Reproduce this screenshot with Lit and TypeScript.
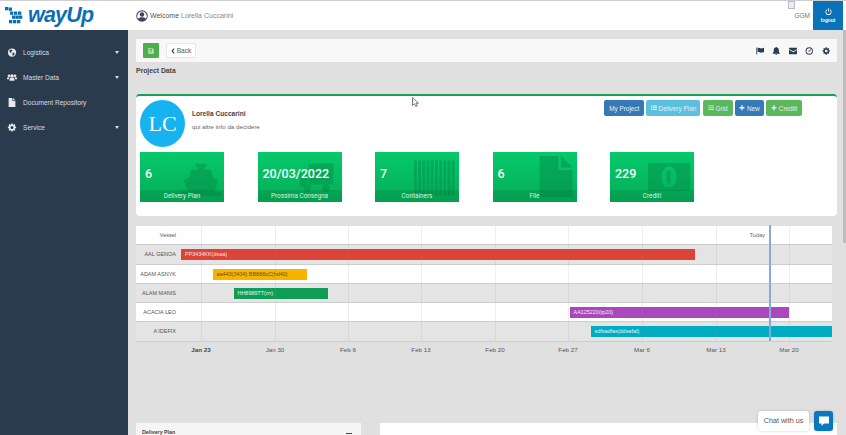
import { LitElement, html, css, svg } from "lit";
import { customElement } from "lit/decorators.js";

const X0 = 136; // gantt left in page coordinates
const ticks = [
  { x: 201, t: "Jan 23", bold: true },
  { x: 275, t: "Jan 30" },
  { x: 348, t: "Feb 6" },
  { x: 421, t: "Feb 13" },
  { x: 495, t: "Feb 20" },
  { x: 568, t: "Feb 27" },
  { x: 642, t: "Mar 6" },
  { x: 716, t: "Mar 13" },
  { x: 789, t: "Mar 20" },
];
const rows = [
  { name: "AAL GENOA", from: 181, to: 695, c: "#db4437", label: "PP3434KK(dsaa)", tx: "#fbe3e0" },
  { name: "ADAM ASNYK", from: 212.5, to: 307, c: "#f4b400", label: "aa443(3434) BB888cC(hd40)", tx: "#6d5200" },
  { name: "ALAM MANIS", from: 233.5, to: 328, c: "#0f9d58", label: "HH8989TT(rrr)", tx: "#e4f6ec" },
  { name: "ACACIA LEO", from: 569.5, to: 789, c: "#ab47bc", label: "AA125220(tp20)", tx: "#f6e6f8" },
  { name: "A IDEFIX", from: 590.5, to: 832, c: "#00acc1", label: "sdfsadfas(ddsafaf)", tx: "#e0f7fa" },
];

const ic = (vb: string, body: unknown, cls = "") =>
  html`<svg class=${cls} viewBox=${vb} fill="currentColor" aria-hidden="true">${body}</svg>`;

const gearPath =
  "M10.2 1h3.6l.5 2.7 1.9.8 2.3-1.6 2.5 2.5-1.6 2.3.8 1.9 2.8.5v3.6l-2.8.5-.8 1.9 1.6 2.3-2.5 2.5-2.3-1.6-1.9.8-.5 2.8h-3.6l-.5-2.8-1.9-.8-2.3 1.6-2.5-2.5 1.6-2.3-.8-1.9-2.8-.5v-3.6l2.8-.5.8-1.9-1.6-2.3 2.5-2.5 2.3 1.6 1.9-.8zM12 8a4 4 0 1 0 0 8 4 4 0 0 0 0-8z";

const icons = {
  globe: ic("0 0 24 24", svg`<path fill-rule="evenodd" d="M12 1a11 11 0 1 0 0 22 11 11 0 0 0 0-22zM5 6l4-2 3 1 1 3-3 2-1 3-3-2zm9 6 5 1-1 5-4 3-1-5z"/>`),
  users: ic("0 0 28 24", svg`<circle cx="14" cy="8" r="5"/><circle cx="5.5" cy="7" r="3.6"/><circle cx="22.5" cy="7" r="3.6"/><path d="M7 21v-4c0-3 3-4 7-4s7 1 7 4v4zM0 17v-3c0-2 2-3 5-3l2 1c-1.200 1-2 2.500-2 5zM28 17v-3c0-2-2-3-5-3l-2 1c1.200 1 2 2.500 2 5z"/>`),
  file: ic("0 0 20 24", svg`<path d="M1 0h10v8h8v16H1zM13 0l6 6h-6z"/>`),
  gear: ic("0 0 24 24", svg`<path fill-rule="evenodd" d=${gearPath}/>`),
  flag: ic("0 0 26 24", svg`<path d="M1 1h2.500v22H1zM5 3c4-2 7 1 10 1s6-1 10-2v13c-4 2-7 2-10 2s-6-3-10-1z"/>`),
  bell: ic("0 0 24 24", svg`<path d="M12 0c1 0 1.800.8 1.800 1.800C17.500 2.600 19.500 5.500 19.500 9c0 6 1.500 8 3.500 10v1H1v-1c2-2 3.500-4 3.500-10 0-3.500 2-6.400 5.700-7.200C10.200.8 11 0 12 0zM9.500 21.500h5a2.500 2.500 0 0 1-5 0z"/>`),
  mail: ic("0 0 28 22", svg`<path d="M1 0h26c.6 0 1 .4 1 1v3L14 12 0 4V1c0-.6.400-1 1-1zM0 7l14 8 14-8v14c0 .6-.4 1-1 1H1c-.6 0-1-.4-1-1z"/>`),
  clock: ic("0 0 24 24", svg`<path fill-rule="evenodd" d="M12 1a11 11 0 1 0 0 22 11 11 0 0 0 0-22zm0 2.800a8.200 8.200 0 1 1 0 16.400 8.200 8.200 0 0 1 0-16.400z"/><path d="M15.500 6.500 17.500 8 12 14.500 8 12l1.200-1.800 2.300 1.500z"/>`),
  power: ic("0 0 24 24", svg`<path d="M10.500 1h3v11h-3z"/><path d="M7 4.500v3.400a7.500 7.500 0 1 0 10 0V4.500a10.500 10.500 0 1 1-10 0z"/>`),
  list: ic("0 0 24 20", svg`<path d="M0 1h5v4H0zM7 1h17v4H7zM0 8h5v4H0zM7 8h17v4H7zM0 15h5v4H0zM7 15h17v4H7z"/>`),
  lines: ic("0 0 24 20", svg`<path d="M0 1h3v3H0zM5 1h19v3H5zM0 8.500h3v3H0zM5 8.500h19v3H5zM0 16h3v3H0zM5 16h19v3H5z"/>`),
  plus: ic("0 0 20 20", svg`<path d="M7.500 1h5v6.500H19v5h-6.500V19h-5v-6.500H1v-5h6.500z"/>`),
  save: ic("0 0 20 20", svg`<path fill-rule="evenodd" d="M1 1h15l3 3v15H1zm4 2v5h9V3zm1 9v2h8v-2z"/>`),
  back: ic("0 0 12 20", svg`<path d="M9 1l2.500 2.500L5.500 10l6 6.500L9 19 0.500 10z"/>`),
  user: ic("0 0 24 24", svg`<path fill-rule="evenodd" d="M12 .5a11.500 11.500 0 1 0 0 23 11.500 11.500 0 0 0 0-23zm0 2a9.500 9.500 0 0 1 7.600 15.200c-1.400-2-4-3-7.600-3s-6.200 1-7.600 3A9.500 9.500 0 0 1 12 2.500z"/><circle cx="12" cy="9" r="4.500"/>`),
  chat: ic("0 0 24 24", svg`<path d="M2 3h20v14H12l-5 5v-5H2z"/>`),
};

const tileArt = {
  ship: ic("0 0 60 50", svg`<path d="M22 2h16v5h-3v4h10l3 12 8 4-6 17H10L4 27l8-4 3-12h10V7h-3z"/><path d="M0 44c6-2 10 3 15 0s10 3 15 0 10 3 15 0 10 3 15 0v6H0z"/>`),
  truck: ic("0 0 60 50", svg`<path d="M14 0h40v34H14zM0 18h12v20H0z"/><circle cx="12" cy="40" r="6"/><circle cx="42" cy="40" r="6"/>`),
  boxes: ic("0 0 60 50", svg`<path d="M0 0h4v50H0zM6 0h4v50H6zM12 0h4v50h-4zM18 0h4v50h-4zM24 0h4v50h-4zM30 0h4v50h-4zM36 0h4v50h-4zM42 0h4v50h-4zM48 0h4v50h-4zM54 0h4v50h-4z"/>`),
  doc: ic("0 0 40 50", svg`<path d="M0 0h23v17h17v33H0zM26 0l14 14H26z"/>`),
  money: ic("0 0 60 40", svg`<path fill-rule="evenodd" d="M0 0h60v40H0zM30 5c-7 0-11 7-11 15s4 15 11 15 11-7 11-15S37 5 30 5z"/><path d="M27 11h5v18h-5z"/>`),
};

const tiles = [
  { v: "6", l: "Delivery Plan", a: tileArt.ship, cls: "ship" },
  { v: "20/03/2022", l: "Prossima Consegna", a: tileArt.truck, cls: "truck" },
  { v: "7", l: "Containers", a: tileArt.boxes, cls: "boxes" },
  { v: "6", l: "File", a: tileArt.doc, cls: "doc" },
  { v: "229", l: "Crediti", a: tileArt.money, cls: "money" },
];

const nav = [
  { i: icons.globe, t: "Logistica", c: true },
  { i: icons.users, t: "Master Data", c: true },
  { i: icons.file, t: "Document Repository", c: false },
  { i: icons.gear, t: "Service", c: true },
];

const dots: [number, number][] = [
  [5, 6], [8.7, 6.5],
  [10, 10.5], [14, 10.5], [18, 10.5],
  [12, 14.5], [15.5, 14.5], [19, 14.5],
  [9, 19], [13, 19], [17, 19],
];

@customElement("app-root")
export class AppRoot extends LitElement {
  static styles = css`
    :host { display: block; height: 435px; overflow: hidden; position: relative; background: #e0e0e0;
      font-family: "Liberation Sans", Arial, sans-serif; color: #444; }
    * { box-sizing: border-box; }
    svg { display: block; }

    .top { height: 30px; background: #fff; border-top: 1px solid #cfcfcf; display: flex; align-items: stretch; padding-right: 3px; }
    .logo { width: 128px; display: flex; align-items: center; position: relative; }
    .dots { width: 28px; height: 29px; flex: none; }
    .word { font: italic 700 21.5px "Liberation Sans", sans-serif; color: #0c6fb5; letter-spacing: -.8px; }
    .welcome { display: flex; align-items: center; gap: 2px; margin-left: 8px; font-size: 7px; color: #555; }
    .welcome svg { width: 12px; height: 12px; color: #3b4656; }
    .welcome span span { color: #888; }
    .spacer { flex: 1; }
    .ggm { width: 25px; position: relative; font-size: 6.5px; color: #777; text-align: right; padding: 11px 3px 0 0; }
    .broken { position: absolute; left: 0; top: 0; width: 7px; height: 8px; border: 1px solid #b8b8c8; background: #e8eef8; }
    .logout { width: 30px; background: #0a72b9; color: #fff; display: flex; flex-direction: column; align-items: center; padding-top: 7px; gap: 3px; font-size: 4.8px; font-weight: 700; }
    .logout svg { width: 7px; height: 7px; }

    .body { display: flex; height: 405px; }
    .side { width: 128px; flex: none; background: #2a3b4d; color: #d7dde3; padding-top: 9.5px; }
    .nav { height: 25px; display: flex; align-items: center; padding-left: 7px; font-size: 6.6px; }
    .nav .ni { width: 16px; flex: none; }
    .nav svg { width: 10px; height: 9px; color: #e6eaee; }
    .caret { margin-left: auto; margin-right: 9px; width: 0; height: 0; border-left: 2.5px solid transparent; border-right: 2.5px solid transparent; border-top: 3px solid #d7dde3; }

    .main { flex: 1; min-width: 0; padding: 9px 9px 0 8px; display: flex; flex-direction: column; }
    .toolbar { height: 23px; background: #f8f8f8; display: flex; align-items: center; padding: 0 7px; gap: 7px; flex: none; }
    .save { width: 16px; height: 15px; background: #4cae4c; border-radius: 1px; color: #bfe6bf; display: flex; align-items: center; justify-content: center; }
    .save svg { width: 6px; height: 6px; }
    .back { width: 30px; height: 15px; background: #fff; border: 1px solid #e6e6e6; border-radius: 2px; display: flex; align-items: center; justify-content: center; gap: 2px; font-size: 6.5px; color: #555; }
    .back svg { width: 4px; height: 6px; color: #333; }
    .tools { margin-left: auto; display: flex; align-items: center; gap: 8px; color: #2b3b50; }
    .tools svg { width: 8.5px; height: 8px; }

    h2 { margin: 4px 0 0; font-size: 6.8px; font-weight: 700; color: #444; height: 28px; line-height: 9px; flex: none; }

    .card { height: 122px; flex: none; background: #fff; border-top: 2px solid #14a155; border-radius: 4px; padding: 4px; display: flex; flex-direction: column; }
    .head { display: flex; height: 52px; }
    .avatar { width: 45px; height: 47px; border-radius: 50%; background: #16b3f0; color: #fff; font: 22px "Liberation Serif", serif; display: flex; align-items: center; justify-content: center; flex: none; }
    .who { margin: 9px 0 0 7px; }
    .who b { display: block; font-size: 6.6px; color: #444; line-height: 9px; }
    .who small { display: block; margin-top: 5px; font-size: 6.2px; color: #666; line-height: 8px; }
    .btns { margin-left: auto; display: flex; gap: 2.2px; margin-right: 31px; height: 16px; }
    .btn { height: 16px; border-radius: 2px; color: #e6eff7; font-size: 6.4px; display: flex; align-items: center; justify-content: center; gap: 2px; }
    .btn svg { width: 6px; height: 5.5px; }
    .blue { background: #337ab7; } .cyan { background: #5bc0de; } .green { background: #5cb85c; }

    .tiles { display: flex; gap: 33.5px; }
    .tile { width: 84px; height: 50px; position: relative; overflow: hidden; background: linear-gradient(180deg, #06c96b, #05ad58); color: #fff; }
    .tile .art { position: absolute; color: #04904a; opacity: .5; }
    .tile .art svg { width: 100%; height: 100%; }
    .ship { left: 41px; top: 6px; width: 40px; height: 42px; }
    .truck { left: 42px; top: 9px; width: 37px; height: 36px; }
    .boxes { left: 39px; top: 5px; width: 42px; height: 42px; }
    .doc { left: 46px; top: 4px; width: 34px; height: 41px; }
    .money { left: 38px; top: 9px; width: 42px; height: 32px; }
    .val { position: relative; padding: 15px 0 0 5px; font: 500 12.5px Roboto, sans-serif; line-height: 13px; color: #f6fff9; }
    .cap { position: absolute; left: 0; right: 0; bottom: 0; height: 12px; background: rgba(0, 90, 45, .16); text-align: center; font: 6.4px/12px Roboto, sans-serif; color: #d5f4e3; }

    .gantt { flex: none; margin: 10px 5px 0 0; position: relative; }
    .row { height: 19.3px; border-bottom: 1px solid #cdcdcd; display: flex; position: relative; }
    .row.w { background: #fff; } .row.g { background: #e4e4e4; }
    .rname { width: 40px; flex: none; text-align: right; font-size: 5.5px; line-height: 19px; color: #555; white-space: nowrap; }
    .bar { position: absolute; top: 4px; height: 11px; font-size: 5.45px; line-height: 11px; padding-left: 4px; white-space: nowrap; overflow: hidden; }
    .vline { position: absolute; top: 0; height: 115px; width: 1px; background: rgba(150, 150, 150, .16); }
    .today { position: absolute; top: -1px; height: 116px; width: 1.5px; background: #86a8dc; }
    .todayl { position: absolute; top: 0; right: 67px; font-size: 5.8px; line-height: 19px; color: #666; }
    .axis { position: relative; height: 16px; }
    .tick { position: absolute; top: 2px; transform: translateX(-50%); font-size: 6.2px; line-height: 12px; color: #555; white-space: nowrap; }
    .tick.b { font-weight: 700; color: #444; }

    .panels { flex: none; margin-top: 65px; display: flex; gap: 19px; height: 12px; }
    .pl { width: 225px; background: #f5f5f5; padding: 6px 9px 0 6px; font-size: 5.3px; font-weight: 700; color: #444; display: flex; justify-content: space-between; line-height: 7px; }
    .pl i { width: 6px; height: 1.5px; background: #444; margin: 4px 0 0; }
    .pr { flex: 1; background: #fff; }

    .scroll { position: absolute; right: 0; top: 30px; width: 3px; height: 213px; background: #bdbdbd; }
    .cursor { position: absolute; left: 412px; top: 97px; width: 7px; height: 10px; }
    .chat { position: absolute; left: 758px; top: 411px; display: flex; gap: 5px; }
    .chatl { width: 51px; height: 20px; background: #fff; border-radius: 3px; box-shadow: 0 0 3px rgba(0,0,0,.2); font-size: 7.2px; line-height: 20px; text-align: center; color: #555; }
    .chatb { width: 19px; height: 20px; background: #0a78c0; border-radius: 3px; color: #fff; display: flex; align-items: center; justify-content: center; box-shadow: 0 0 3px rgba(0,0,0,.2); }
    .chatb svg { width: 12px; height: 12px; }
  `;

  render() {
    return html`
      <div class="top">
        <div class="logo">
          <svg class="dots" viewBox="0 0 28 29" fill="#0c6fb5">
            ${dots.map(([x, y]) => svg`<rect x=${x} y=${y} width="3.3" height="3.3"/>`)}
          </svg>
          <span class="word">wayUp</span>
        </div>
        <div class="welcome">${icons.user}<span>Welcome <span>Lorella Cuccarini</span></span></div>
        <div class="spacer"></div>
        <div class="ggm"><i class="broken"></i>GGM</div>
        <div class="logout">${icons.power}<span>logout</span></div>
      </div>
      <div class="body">
        <nav class="side">
          ${nav.map(
            (n) => html`<div class="nav"><span class="ni">${n.i}</span><span>${n.t}</span>${n.c ? html`<span class="caret"></span>` : ""}</div>`
          )}
        </nav>
        <main class="main">
          <div class="toolbar">
            <div class="save">${icons.save}</div>
            <div class="back">${icons.back}<span>Back</span></div>
            <div class="tools">${icons.flag}${icons.bell}${icons.mail}${icons.clock}${icons.gear}</div>
          </div>
          <h2>Project Data</h2>
          <section class="card">
            <div class="head">
              <div class="avatar">LC</div>
              <div class="who"><b>Lorella Cuccarini</b><small>qui altre info da decidere</small></div>
              <div class="btns">
                <div class="btn blue" style="width:40px">My Project</div>
                <div class="btn cyan" style="width:54px">${icons.list}Delivery Plan</div>
                <div class="btn green" style="width:30px">${icons.lines}Grid</div>
                <div class="btn blue" style="width:29px">${icons.plus}New</div>
                <div class="btn green" style="width:36px">${icons.plus}Crediti</div>
              </div>
            </div>
            <div class="tiles">
              ${tiles.map(
                (t) => html`<div class="tile"><div class="art ${t.cls}">${t.a}</div><div class="val">${t.v}</div><div class="cap">${t.l}</div></div>`
              )}
            </div>
          </section>
          <section class="gantt">
            <div class="row w"><div class="rname">Vessel</div><div class="todayl">Today</div></div>
            ${rows.map(
              (r, i) => html`<div class="row ${i % 2 ? "w" : "g"}">
                <div class="rname">${r.name}</div>
                <div class="bar" style="left:${r.from - X0}px;width:${r.to - r.from}px;background:${r.c};color:${r.tx}">${r.label}</div>
              </div>`
            )}
            ${ticks.map((t) => html`<div class="vline" style="left:${t.x - X0}px"></div>`)}
            <div class="today" style="left:${769 - X0}px"></div>
            <div class="axis">
              ${ticks.map((t) => html`<span class="tick ${t.bold ? "b" : ""}" style="left:${t.x - X0}px">${t.t}</span>`)}
            </div>
          </section>
          <div class="panels">
            <div class="pl"><span>Delivery Plan</span><i></i></div>
            <div class="pr"></div>
          </div>
        </main>
      </div>
      <div class="scroll"></div>
      <svg class="cursor" viewBox="0 0 7 10"><path d="M.5.5v8l2-1.800 1.300 2.800 1.400-.6L4 6.200h2.500z" fill="#fff" stroke="#444" stroke-width=".7"/></svg>
      <div class="chat"><div class="chatl">Chat with us</div><div class="chatb">${icons.chat}</div></div>
    `;
  }
}
